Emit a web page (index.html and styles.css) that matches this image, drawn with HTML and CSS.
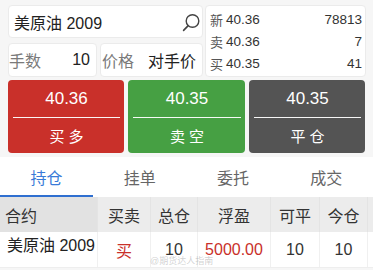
FILE: index.html
```html
<!DOCTYPE html>
<html lang="zh">
<head>
<meta charset="utf-8">
<link rel="stylesheet" href="styles.css">
</head>
<body>
<div class="page">
  <div class="top">
    <div class="left">
      <div class="box search">
        <span class="sym">美原油 2009</span>
        <svg class="mag" width="20" height="20" viewBox="0 0 20 20"><circle cx="11.5" cy="8" r="6.3" fill="none" stroke="#444" stroke-width="1.4"/><path d="M7.2 12.6 L2.6 17.4" stroke="#444" stroke-width="1.6" stroke-linecap="round"/></svg>
      </div>
      <div class="row2">
        <div class="box field"><span class="lbl">手数</span><span class="val">10</span></div>
        <div class="box field"><span class="lbl">价格</span><span class="val">对手价</span></div>
      </div>
    </div>
    <div class="box quote">
      <div class="q"><span class="k">新</span><span class="p">40.36</span><span class="v">78813</span></div>
      <div class="q"><span class="k">卖</span><span class="p">40.36</span><span class="v">7</span></div>
      <div class="q"><span class="k">买</span><span class="p">40.35</span><span class="v">41</span></div>
    </div>
  </div>

  <div class="btns">
    <div class="btn red"><div class="price">40.36</div><div class="act">买 多</div></div>
    <div class="btn green"><div class="price">40.35</div><div class="act">卖 空</div></div>
    <div class="btn dark"><div class="price">40.35</div><div class="act">平 仓</div></div>
  </div>

  <div class="tabs">
    <div class="tab active">持仓</div>
    <div class="tab">挂单</div>
    <div class="tab">委托</div>
    <div class="tab">成交</div>
  </div>

  <div class="table">
    <div class="tr head">
      <div class="c c1 first">合约</div>
      <div class="c c2">买卖</div>
      <div class="c c3">总仓</div>
      <div class="c c4">浮盈</div>
      <div class="c c5">可平</div>
      <div class="c c6">今仓</div>
      <div class="c c7"></div>
    </div>
    <div class="tr body">
      <div class="c c1 left">美原油 2009</div>
      <div class="c c2 redt">买</div>
      <div class="c c3">10</div>
      <div class="c c4 redt">5000.00</div>
      <div class="c c5">10</div>
      <div class="c c6">10</div>
      <div class="c c7"></div>
    </div>
  </div>
  <div class="wm">@期货达人指南</div>
</div>
</body>
</html>
```

FILE: styles.css
```css
* { box-sizing: border-box; }
html, body { margin: 0; padding: 0; }
body {
  width: 373px;
  height: 270px;
  overflow: hidden;
  background: #f6f6f6;
  font-family: "Liberation Sans", "Noto Sans CJK SC", sans-serif;
  color: #222;
}
.page { position: relative; width: 373px; height: 270px; }

.top {
  display: grid;
  grid-template-columns: 195px 161px;
  column-gap: 2px;
  padding: 5px 0 0 8px;
}
.left { display: flex; flex-direction: column; gap: 5px; }
.box {
  background: #fff;
  border: 1px solid #ebebeb;
  border-radius: 4px;
}
.search {
  height: 33px;
  display: flex;
  align-items: center;
  justify-content: space-between;
  padding: 0 1px 0 5px;
  font-size: 16px;
}
.mag { margin-top: 2px; }
.row2 {
  display: grid;
  grid-template-columns: 89px 103px;
  column-gap: 3px;
  height: 34px;
}
.field {
  display: flex;
  align-items: center;
  justify-content: space-between;
  font-size: 16px;
  padding: 0 6px 0 0;
}
.field .lbl { color: #7a7a7a; }
.row2 .field:first-child { padding-left: 0; }
.row2 .field:last-child { padding-left: 1px; }
.field .val { color: #222; }

.quote {
  display: flex;
  flex-direction: column;
  justify-content: space-around;
  padding: 2px 3px 2px 4px;
  font-size: 13.5px;
}
.q { display: flex; align-items: center; }
.q .k { color: #555; width: 16px; font-size: 13px; }
.q .p { color: #333; }
.q .v { margin-left: auto; color: #333; }

.btns {
  display: grid;
  grid-template-columns: 116px 117px 116px;
  column-gap: 4px;
  padding: 0 8px;
  margin-top: 3px;
}
.btn {
  height: 73px;
  border-radius: 4px;
  color: #fff;
  display: flex;
  flex-direction: column;
  padding: 0 4px 0 5px;
}
.btn .price {
  height: 38px;
  border-bottom: 1.5px solid rgba(255,255,255,0.95);
  display: flex;
  align-items: center;
  justify-content: center;
  font-size: 17px;
  padding-top: 1px;
}
.btn .act {
  flex: 1;
  display: flex;
  align-items: center;
  justify-content: center;
  font-size: 15px;
}
.red { background: #c9302a; }
.green { background: #46a043; }
.dark { background: #545454; }

.tabs {
  display: grid;
  grid-template-columns: repeat(4, 93.25px);
  margin-top: 4px;
  background: #fff;
}
.tab {
  height: 40px;
  display: flex;
  align-items: center;
  justify-content: center;
  font-size: 16px;
  color: #666;
  border-bottom: 2px solid transparent;
  padding-top: 2px;
}
.tab.active { color: #3a7bd8; border-bottom-color: #2f6fd0; }

.table { background: #fff; }
.tr {
  display: grid;
  grid-template-columns: 98px 53px 47px 73px 49px 48px 5px;
}
.head { height: 35px; background: #ececec; }
.body { height: 36px; background: #fff; border-bottom: 1px solid #eee; }
.c {
  display: flex;
  align-items: center;
  justify-content: center;
  font-size: 16px;
  color: #333;
  border-right: 1px solid #e4e4e4;
}
.body .c { border-right-color: #f0f0f0; }
.head .first { background: #e2e2e2; justify-content: flex-start; padding-left: 5px; }
.c.left { justify-content: flex-start; padding-left: 5px; color: #222; }
.redt { color: #c9302a; }
.c7 { border-right: none; }

.wm {
  position: absolute;
  left: 150px;
  top: 254px;
  font-size: 9px;
  color: rgba(120,120,120,0.35);
}
```
